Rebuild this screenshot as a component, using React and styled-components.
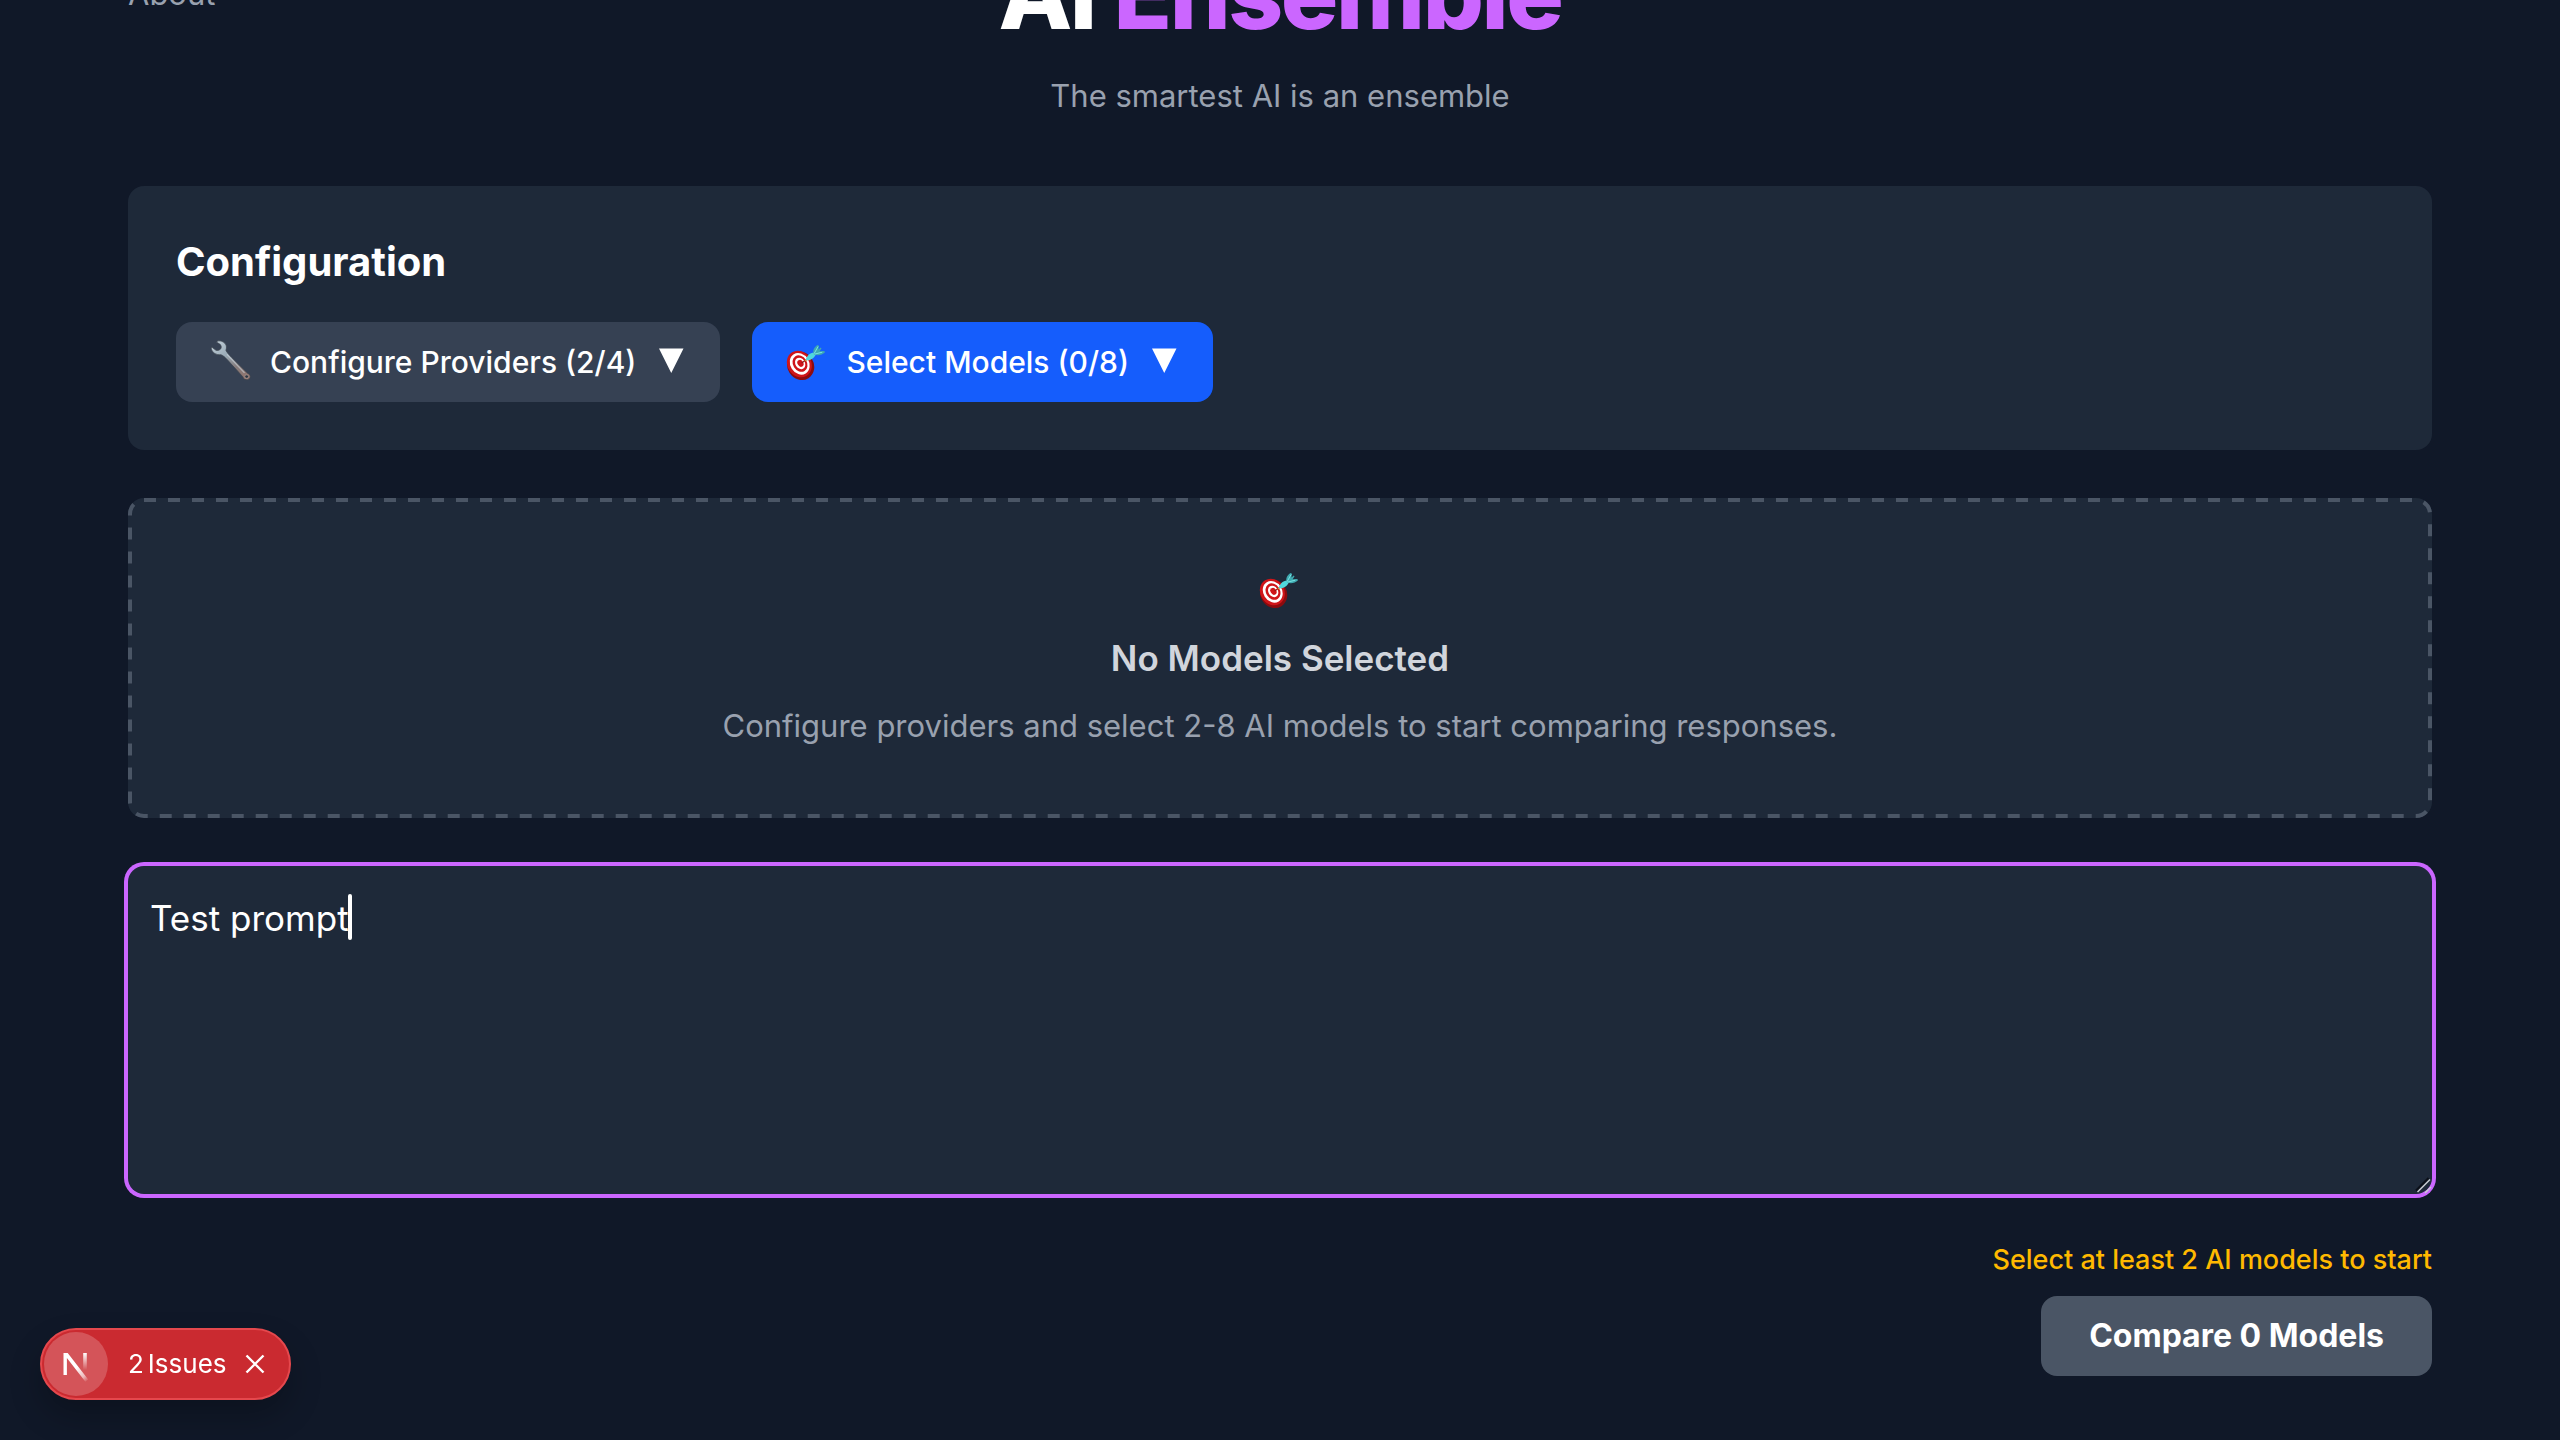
import React, { useState } from "react";
import styled, { createGlobalStyle } from "styled-components";

const GlobalStyle = createGlobalStyle`
  *, *::before, *::after { box-sizing: border-box; }
  body {
    margin: 0;
    background: #101828;
    color: #ffffff;
    font-family: Inter, "Liberation Sans", sans-serif;
    font-size: 31px;
    line-height: 48px;
    -webkit-font-smoothing: antialiased;
  }
  h1, h2, h3, p { margin: 0; }
  button, textarea { font-family: inherit; }
`;

/* The view rests at the end of the page, so the content is anchored to the bottom. */
const Viewport = styled.div`
  display: flex;
  flex-direction: column;
  justify-content: flex-end;
  height: 100vh;
  overflow: hidden;
`;

const Page = styled.main`
  display: flex;
  flex-direction: column;
  gap: 48px;
  padding: 64px 128px;
`;

const Header = styled.header`
  display: flex;
  flex-direction: column;
  gap: 30px;
  padding-bottom: 18px;
  text-align: center;
`;

const TitleRow = styled.div`
  display: grid;
  grid-template-columns: 1fr auto 1fr;
  align-items: center;
`;

const NavLink = styled.a`
  justify-self: start;
  color: #99a1af;
  text-decoration: none;
`;

const Title = styled.h1`
  font-size: 96px;
  font-weight: 800;
  line-height: 96px;
  letter-spacing: -0.025em;
`;

const Accent = styled.span`
  color: #cb66ff;
`;

const Muted = styled.p`
  color: #99a1af;
`;

const Card = styled.section`
  display: flex;
  flex-direction: column;
  gap: 32px;
  padding: 48px;
  border-radius: 16px;
  background: #1e2939;
`;

const CardTitle = styled.h2`
  font-size: 40px;
  font-weight: 700;
  line-height: 56px;
`;

const ButtonRow = styled.div`
  display: flex;
  gap: 32px;
`;

const ToggleButton = styled.button`
  display: flex;
  align-items: center;
  gap: 16px;
  height: 80px;
  padding: 0 32px;
  border: 0;
  border-radius: 16px;
  background: ${(p) => (p.$primary ? "#155dfc" : "#364153")};
  color: #ffffff;
  font-size: 30px;
  font-weight: 500;
  line-height: 48px;
  white-space: nowrap;
  cursor: pointer;
`;

const EmptyState = styled(Card)`
  position: relative;
  align-items: center;
  gap: 16px;
  padding: 68px;
  text-align: center;
`;

const DashedOutline = styled.svg`
  position: absolute;
  inset: 0;
  width: 100%;
  height: 100%;

  rect {
    width: calc(100% - 4px);
    height: calc(100% - 4px);
    fill: none;
    stroke: #4a5565;
    stroke-width: 4px;
    stroke-dasharray: 12 12;
  }
`;

const EmojiLine = styled.div`
  display: flex;
  align-items: center;
  height: 48px;
`;

const EmptyTitle = styled.h3`
  color: #d1d5dc;
  font-size: 35px;
  font-weight: 600;
  line-height: 56px;
`;

const Form = styled.form`
  display: flex;
  flex-direction: column;
  gap: 46px;
`;

const Editor = styled.div`
  position: relative;
  display: flex;
`;

const Prompt = styled.textarea`
  width: 100%;
  padding: 24px 22px;
  border: 0;
  border-radius: 16px;
  outline: none;
  box-shadow: 0 0 0 4px #cb66ff;
  background: #1e2939;
  color: #ffffff;
  caret-color: transparent;
  font-size: 35px;
  line-height: 56px;
  resize: none;
`;

const Caret = styled.span`
  position: absolute;
  top: 28px;
  left: 220px;
  width: 4px;
  height: 46px;
  border-radius: 2px;
  background: #ffffff;
`;

const Grip = styled.svg`
  position: absolute;
  right: 0;
  bottom: 0;
`;

const Footer = styled.footer`
  display: flex;
  flex-direction: column;
  align-items: flex-end;
  gap: 16px;
`;

const Hint = styled.p`
  color: #ffb900;
  font-size: 27px;
  font-weight: 500;
  line-height: 40px;
`;

const CompareButton = styled.button`
  height: 80px;
  padding: 0 48px;
  border: 0;
  border-radius: 16px;
  background: #4a5565;
  color: #ffffff;
  font-size: 32px;
  font-weight: 700;
  line-height: 48px;
`;

const Badge = styled.div`
  position: fixed;
  bottom: 40px;
  left: 40px;
  display: flex;
  align-items: center;
  height: 72px;
  padding: 2px;
  border: 2px solid #e5484d;
  border-radius: 36px;
  background: #ca2a30;
  box-shadow: 0 16px 32px rgba(0, 0, 0, 0.24);
`;

const BadgeLogo = styled.button`
  display: flex;
  padding: 0;
  border: 0;
  border-radius: 50%;
  background: rgba(255, 255, 255, 0.2);
`;

const BadgeLabel = styled.button`
  display: flex;
  gap: 4px;
  padding: 0 0 0 20px;
  border: 0;
  background: none;
  color: #ffffff;
  font-size: 26px;
  line-height: 32px;
`;

const BadgeClose = styled.button`
  display: flex;
  padding: 0 22px 0 18px;
  border: 0;
  background: none;
`;

const Wrench = () => (
  <svg width="46" height="48" viewBox="0 0 46 48" aria-hidden="true">
    <defs>
      <linearGradient id="steel" x1="4" y1="2" x2="40" y2="46" gradientUnits="userSpaceOnUse">
        <stop offset="0" stopColor="#c3d0da" />
        <stop offset="0.35" stopColor="#9aabb7" />
        <stop offset="0.65" stopColor="#857a7a" />
        <stop offset="1" stopColor="#96736b" />
      </linearGradient>
    </defs>
    <g transform="translate(1 1.5) scale(1 0.9)">
      <path
        d="M8.5 1.6c4.2-.6 7.6 1.6 8.7 5.2.5 1.8.3 3.6-.3 5.1 1 2.6 3.2 5.2 6 8.3l15.6 17.2c2.3 1 3.3 3 2.5 5-.8 2.2-3.4 3-5.6 1.6-.9-.6-1.4-1.5-1.6-2.6L18.6 22.8c-2.6-3-4.6-5.200-6.600-5.800-4.800.5-9.200-2.600-9.800-7.400l.6-1.200 4.200 3.600c2.200.6 4.300-.5 5-2.300.5-1.600.1-3.200-1.200-4.600L7.600 3z"
        fill="url(#steel)"
        stroke="#3b444e"
        strokeWidth="0.8"
      />
      <path d="M18 16.5 35.5 37" stroke="#d3dde4" strokeWidth="1.3" opacity="0.55" />
      <circle cx="37.7" cy="41.2" r="1.9" fill="#2d3541" stroke="#b09c96" strokeWidth="0.7" />
    </g>
  </svg>
);

const Target = () => (
  <svg width="46" height="48" viewBox="0 0 46 48" aria-hidden="true">
    <g transform="translate(1 1.5) scale(0.92)">
      <ellipse cx="17" cy="28.5" rx="14.3" ry="16" transform="rotate(-32 17 28.5)" fill="#8d0b0e" />
      <ellipse cx="15.6" cy="26.6" rx="13" ry="15" transform="rotate(-32 15.6 26.6)" fill="#cf1519" />
      <ellipse cx="16" cy="26.4" rx="10.2" ry="12.3" transform="rotate(-32 16 26.4)" fill="#fff" />
      <ellipse cx="16.3" cy="26.2" rx="7.6" ry="9.4" transform="rotate(-32 16.3 26.2)" fill="#cf1519" />
      <ellipse cx="16.5" cy="26" rx="5.2" ry="6.6" transform="rotate(-32 16.5 26)" fill="#fff" />
      <ellipse cx="16.8" cy="25.9" rx="3.1" ry="4" transform="rotate(-32 16.8 25.9)" fill="#cf1519" />
      <path d="M18 25.5 25 21" stroke="#8b1a12" strokeWidth="1.2" />
      <path d="M20.5 24 25 19.5l1.5 2.3z" fill="#f2b32a" />
      <path d="M22.5 22.5c.8-4.4 4-7.7 9.4-8.700l1.600 2.400c-2 4.200-6.400 7-11 6.300z" fill="#4fd8dc" />
      <path d="M31 15.4c-1-3.6.8-7.4 4.4-9.4l1.5.8-.6 4.2 2.6-2.2.8.6-2 3.4 5-.4.8 1.4c-3 3-7.4 4-11.7 2.6z" fill="#3fa9b0" />
      <path d="m31.5 15.6 4.5-8M32.5 15.8l8-2" stroke="#7ce9e8" strokeWidth="1" fill="none" />
    </g>
  </svg>
);

const Arrow = () => (
  <svg width="36" height="48" viewBox="0 0 36 48" aria-hidden="true">
    <path d="M7 10.5h24.5L19.25 35z" fill="#fff" />
  </svg>
);

const NextLogo = () => (
  <svg width="64" height="64" viewBox="0 0 64 64" aria-hidden="true">
    <defs>
      <linearGradient id="diagonal" x1="33" y1="35" x2="44" y2="49" gradientUnits="userSpaceOnUse">
        <stop offset="0" stopColor="#fff" />
        <stop offset="0.65" stopColor="#fff" stopOpacity="0.6" />
        <stop offset="1" stopColor="#fff" stopOpacity="0" />
      </linearGradient>
      <linearGradient id="stem" x1="41" y1="21" x2="41" y2="38" gradientUnits="userSpaceOnUse">
        <stop offset="0" stopColor="#fff" />
        <stop offset="1" stopColor="#fff" stopOpacity="0" />
      </linearGradient>
    </defs>
    <path d="M19.5 21h4.2l20.5 26.5-2.8 2.2L22.9 26v17h-3.4z" fill="url(#diagonal)" />
    <path d="M39.2 21h3.6v17h-3.6z" fill="url(#stem)" />
  </svg>
);

const CloseIcon = () => (
  <svg width="20" height="20" viewBox="0 0 20 20" aria-hidden="true">
    <path d="m1.500 1.500 17 17m0-17-17 17" stroke="#fff" strokeWidth="2.4" />
  </svg>
);

export default function App() {
  const [prompt, setPrompt] = useState("Test prompt");
  return (
    <Viewport>
      <GlobalStyle />
      <Page>
        <Header>
          <TitleRow>
            <NavLink href="#about">About</NavLink>
            <Title>
              AI <Accent>Ensemble</Accent>
            </Title>
          </TitleRow>
          <Muted>The smartest AI is an ensemble</Muted>
        </Header>

        <Card>
          <CardTitle>Configuration</CardTitle>
          <ButtonRow>
            <ToggleButton type="button">
              <Wrench />
              <span>Configure Providers (2/4)</span>
              <Arrow />
            </ToggleButton>
            <ToggleButton type="button" $primary>
              <Target />
              <span>Select Models (0/8)</span>
              <Arrow />
            </ToggleButton>
          </ButtonRow>
        </Card>

        <EmptyState>
          <DashedOutline aria-hidden="true">
            <rect x="2" y="2" rx="14" />
          </DashedOutline>
          <EmojiLine>
            <Target />
          </EmojiLine>
          <EmptyTitle>No Models Selected</EmptyTitle>
          <Muted>Configure providers and select 2-8 AI models to start comparing responses.</Muted>
        </EmptyState>

        <Form onSubmit={(e) => e.preventDefault()}>
          <Editor>
            <Prompt
              aria-label="Prompt"
              rows={5}
              value={prompt}
              onChange={(e) => setPrompt(e.target.value)}
            />
            <Caret />
            <Grip width="18" height="18" viewBox="0 0 18 18" aria-hidden="true">
              <path d="M2 14.5 14.5 2" stroke="#0b0f18" strokeWidth="2" />
              <path d="M3.5 16 16 3.5M11 17l6-6" stroke="#c9ccd1" strokeWidth="1.5" />
            </Grip>
          </Editor>

          <Footer>
            <Hint>Select at least 2 AI models to start</Hint>
            <CompareButton type="submit">Compare 0 Models</CompareButton>
          </Footer>
        </Form>
      </Page>

      <Badge>
        <BadgeLogo type="button" aria-label="Open dev tools">
          <NextLogo />
        </BadgeLogo>
        <BadgeLabel type="button">
          <span>2</span>
          <span>Issues</span>
        </BadgeLabel>
        <BadgeClose type="button" aria-label="Dismiss">
          <CloseIcon />
        </BadgeClose>
      </Badge>
    </Viewport>
  );
}
